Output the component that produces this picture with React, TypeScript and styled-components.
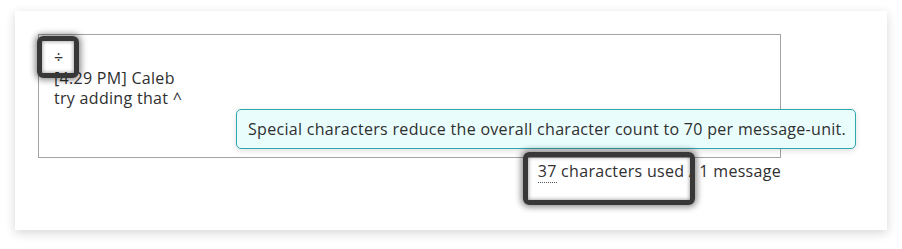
import React from "react";
import styled, { createGlobalStyle } from "styled-components";

const Global = createGlobalStyle`
  body {
    margin: 0;
    background: #ffffff;
    font-family: "Open Sans", "Noto Sans", sans-serif;
    color: #2f2f2f;
  }
`;

const Page = styled.div`
  position: relative;
  width: 902px;
  height: 249px;
  padding: 11px 15px 0 15px;
  box-sizing: border-box;
`;

const Card = styled.div`
  background: #fff;
  height: 219px;
  box-shadow: 0 3px 10px rgba(0, 0, 0, 0.16);
  padding: 23px 106px 0 23px;
  box-sizing: border-box;
  display: flex;
  flex-direction: column;
`;

const Field = styled.div`
  position: relative;
  height: 124px;
  border: 1px solid #a3a3a3;
  box-sizing: border-box;
  padding: 12px 15px;
  font-size: 16px;
  letter-spacing: 0.3px;
  line-height: 20.5px;
`;

const Line = styled.div`
  white-space: pre;
`;

const Tooltip = styled.div`
  position: absolute;
  left: 197px;
  top: 74px;
  width: 620px;
  height: 40px;
  box-sizing: border-box;
  padding: 0 11px;
  display: flex;
  align-items: center;
  background: #eafdfd;
  border: 1px solid #2ea7ae;
  border-radius: 5px;
  box-shadow: 0 2px 6px rgba(0, 0, 0, 0.12);
  font-size: 16px;
  letter-spacing: 0.3px;
  white-space: nowrap;
`;

const Footer = styled.div`
  display: flex;
  justify-content: flex-end;
  padding-top: 3px;
  font-size: 16px;
  letter-spacing: 0.3px;
  line-height: 20px;
`;

const Count = styled.span`
  border-bottom: 1px dotted #555;
  line-height: 16px;
`;

const Marker = styled.div<{ $l: number; $t: number; $w: number; $h: number }>`
  position: absolute;
  left: ${(p) => p.$l}px;
  top: ${(p) => p.$t}px;
  width: ${(p) => p.$w}px;
  height: ${(p) => p.$h}px;
  box-sizing: border-box;
  border: 5px solid #383838;
  border-radius: 6px;
  filter: blur(0.6px);
  box-shadow: 0 0 6px 2px rgba(0, 0, 0, 0.45), inset 0 0 4px rgba(0, 0, 0, 0.45);
  pointer-events: none;
`;

export default function App() {
  return (
    <>
      <Global />
      <Page>
        <Card>
          <Field>
            <Line>÷</Line>
            <Line>[4:29 PM] Caleb</Line>
            <Line>try adding that ^</Line>
            <Tooltip>
              Special characters reduce the overall character count to 70 per
              message-unit.
            </Tooltip>
          </Field>
          <Footer>
            <span>
              <Count>37</Count> characters used / 1 message
            </span>
          </Footer>
        </Card>
        <Marker $l={37} $t={36} $w={42} $h={42} />
        <Marker $l={523} $t={152} $w={172} $h={53} />
      </Page>
    </>
  );
}
